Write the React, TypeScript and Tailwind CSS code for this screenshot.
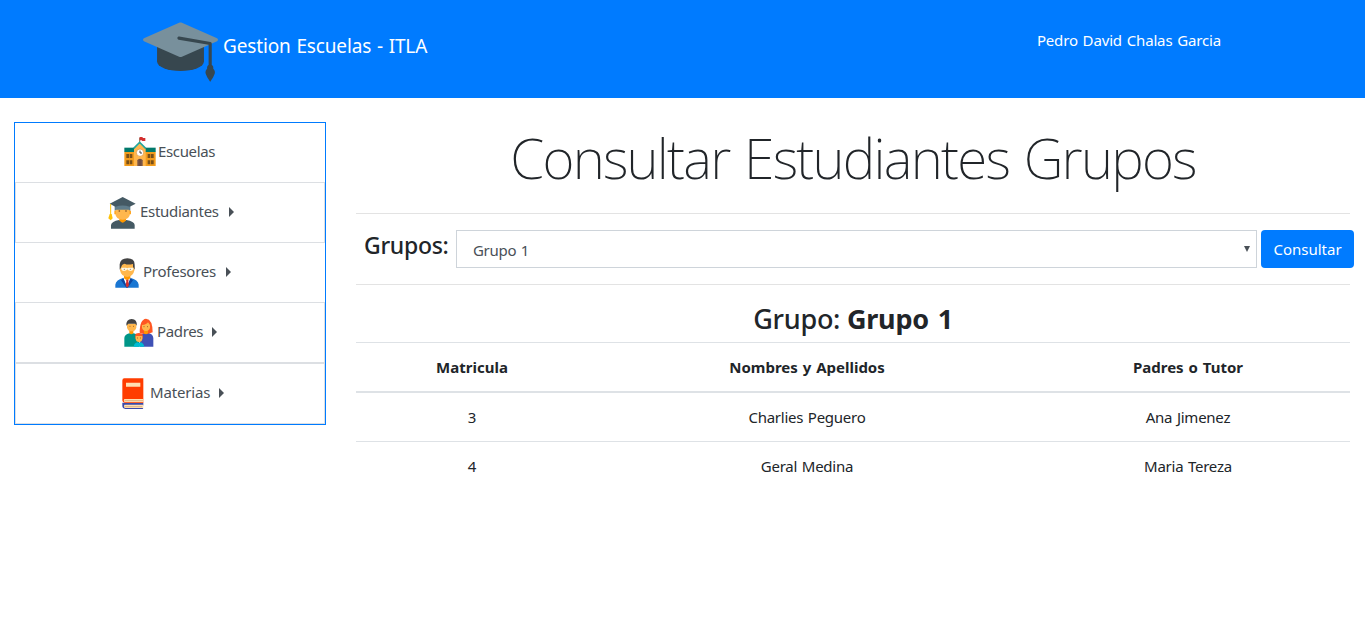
import type { ReactNode } from "react";
import { FcGraduationCap } from "react-icons/fc";

function SchoolIcon() {
  return (
    <svg className="h-[32px] w-[32px]" viewBox="0 0 96 96">
      <path d="M47 5v20" stroke="#8f6b55" strokeWidth="3" />
      <path d="M47 3h8l2 3h7v9h-9l-2-2h-6z" fill="#d32f2f" />
      <path d="M1 47h94v43H1z" fill="#f39c1d" />
      <path d="M1 35h94v13H1z" fill="#00796b" />
      <path d="M30 38 47 22l18 16v52H30z" fill="#ffb74d" />
      <path d="m29 37 18-18 18 18" fill="none" stroke="#26a69a" strokeWidth="5" />
      <circle cx="48" cy="50" r="11" fill="#fff" stroke="#d99030" strokeWidth="2" />
      <path d="M48 44v7h6" fill="none" stroke="#424242" strokeWidth="3" />
      <path d="M40 90V73q1-5 8-5t8 5v17z" fill="#795548" />
      <path d="M48 69v21" stroke="#5d4037" strokeWidth="2" />
      <path d="M7 54h8v12H7zm10 0h8v12h-8zM7 73h8v12H7zm10 0h8v12h-8zM71 54h8v12h-8zm10 0h8v12h-8zM71 73h8v12h-8zm10 0h8v12h-8z" fill="#795019" />
    </svg>
  );
}

function StudentIcon() {
  return (
    <svg className="h-[32px] w-[28px]" viewBox="0 0 84 96">
      <path d="M9 95V84q2-11 24-15h22q24 4 25 15v11z" fill="#455a64" />
      <path d="M34 61h20v9q-10 14-20 0z" fill="#ff9800" />
      <path d="M22 32h44v18q-1 16-22 18-21-2-22-18z" fill="#ffb74d" />
      <path d="M19 41h5v11h-5zM64 41h5v11h-5z" fill="#ffa726" />
      <path d="M20 24h47v17l-5-3H25l-5 3z" fill="#607d8b" />
      <path d="M44 0 83 20 65 29q-21-7-43 0L5 20z" fill="#455a64" />
      <path d="M8 21v34" stroke="#ffc107" strokeWidth="3" />
      <path d="M5 51h6l3 13-6 6-7-6z" fill="#ffc107" />
      <circle cx="34" cy="42" r="2.5" fill="#784719" /><circle cx="54" cy="42" r="2.5" fill="#784719" />
    </svg>
  );
}

function TeacherIcon() {
  return (
    <svg className="h-[30px] w-[24px]" viewBox="0 0 72 90">
      <path d="M1 89V80q1-15 26-21h18q25 6 26 21v9z" fill="#1976d2" />
      <path d="m25 61 11 28 12-28-4-2H29z" fill="#fff" />
      <path d="M25 60 18 67l16 22h4l16-22-8-7-10 27z" fill="#0d47a1" />
      <path d="m33 65 4-2 4 2-1 5 2 12-5 7-5-7 2-12z" fill="#d32f2f" />
      <path d="M27 50h19v11q-10 9-19 0z" fill="#ff9800" />
      <path d="M15 27q2-14 21-14 20 0 22 14v10q-3 18-21 20-19-2-22-20z" fill="#ffb74d" />
      <path d="M14 35V19Q16 1 37 1q22 0 22 19v15l-5-8V18q-16 4-25-1-10 2-10 10z" fill="#424242" />
      <path d="M19 29h14l4 2 4-2h14v5q-2 5-8 5-7 0-10-5-3 5-10 5t-8-5z" fill="#fff8e1" />
      <circle cx="28" cy="34" r="2" fill="#a1887f" /><circle cx="46" cy="34" r="2" fill="#a1887f" />
    </svg>
  );
}

function FamilyIcon() {
  return (
    <svg className="h-[30px] w-[30px]" viewBox="0 0 90 90">
      <path d="M1 86V60q1-11 15-14h13q15 3 16 14v26z" fill="#009688" />
      <path d="M47 86V59q2-11 14-14h12q14 3 15 15v26z" fill="#3f51b5" />
      <path d="M47 44q0-40 19-42 20 2 20 41-20 9-39 1z" fill="#ff5722" />
      <path d="M60 35h12v11q-6 6-12 0zM16 35h12v11q-6 6-12 0z" fill="#ff9800" />
      <path d="M9 17h28v12q-3 11-14 11T9 29zM54 21q14-1 18-8l6 8v9q-3 9-12 9t-12-9z" fill="#ffb74d" />
      <path d="M7 23q-1-20 16-20 17 0 15 20l-4-6H13z" fill="#424242" />
      <path d="M34 52q0-7 11-7t11 7v10H34z" fill="#ff5722" />
      <path d="M35 54h20v9q-1 9-10 9t-10-9z" fill="#ffb74d" />
      <path d="M29 86q2-12 12-13 4 4 8 0 10 2 12 13z" fill="#00bcd4" />
      <path d="M17 25h2m9 0h2m29 1h2m9 0h2M40 60h2m7 0h2" stroke="#784719" strokeWidth="3" />
    </svg>
  );
}

function BookIcon() {
  return (
    <svg className="h-[32px] w-[22px]" viewBox="0 0 66 96">
      <path d="M1 74h63v8l-2 2v6l2 3H10Q1 91 1 84z" fill="#3949ab" />
      <path d="M7 80h57v10H8q-4-5-1-10z" fill="#ffe0b2" />
      <path d="M7 1h57v74H10Q1 73 1 66V8q0-7 6-7z" fill="#ff3d00" />
      <path d="M12 14h43v12H12zM7 63h57v10H9q-6-3-2-10z" fill="#ffe0b2" />
      <path d="M8 68h55M8 86h53" stroke="#c99a70" strokeWidth="2" />
    </svg>
  );
}

type Item = { label: string; icon: ReactNode; row: string; text: string; caret: boolean };

const items: Item[] = [
  { label: "Escuelas", icon: <SchoolIcon />, row: "h-[60px] pl-[109px] pb-px border-b", text: "w-[60px] ml-[2px] tracking-[-0.35px]", caret: false },
  { label: "Estudiantes", icon: <StudentIcon />, row: "h-[60px] pl-[92px] border-b border-x", text: "w-[81px] ml-[4px] tracking-[-0.3px]", caret: true },
  { label: "Profesores", icon: <TeacherIcon />, row: "h-[60px] pl-[100px] border-b", text: "w-[75px] ml-[4px] tracking-[-0.25px]", caret: true },
  { label: "Padres", icon: <FamilyIcon />, row: "h-[61px] pl-[108px] border-b-2 border-x", text: "w-[47px] ml-[3px] tracking-[-0.35px]", caret: true },
  { label: "Materias", icon: <BookIcon />, row: "h-[60px] pl-[106px] border-b border-x", text: "w-[61px] ml-[6px] tracking-[-0.15px]", caret: true },
];

const students = [
  ["3", "Charlies Peguero", "Ana Jimenez"],
  ["4", "Geral Medina", "Maria Tereza"],
];

export default function App() {
  return (
    <div className="min-h-[620px] bg-white font-['Noto_Sans','Open_Sans',sans-serif] text-[15px] text-[#212529]">
      <header className="flex h-[98px] items-start bg-[#007bff] text-white">
        <FcGraduationCap className="mt-[10px] ml-[143px] h-[75px] w-[75px]" />
        <span className="mt-[31px] ml-[5px] text-[19px] leading-[30px] tracking-[-0.15px] [word-spacing:1px]">Gestion Escuelas - ITLA</span>
        <span className="mt-[28px] mr-[144px] ml-auto leading-6 tracking-[-0.15px] [word-spacing:1px]">Pedro David Chalas Garcia</span>
      </header>
      <div className="flex items-start">
        <nav className="mt-[24px] ml-[14px] w-[312px] shrink-0 border border-[#007bff]">
          {items.map((item) => (
            <a key={item.label} className={`flex items-center border-[#dcdfe3] text-[#495057] ${item.row}`}>
              {item.icon}
              <span className={`mb-[3px] whitespace-nowrap leading-6 ${item.text}`}>{item.label}</span>
              {item.caret && <span className="mb-[2px] ml-[8px] border-y-[5px] border-l-[5px] border-y-transparent border-l-[#495057]" />}
            </a>
          ))}
        </nav>
        <main className="mr-[15px] ml-[30px] w-[994px]">
          <h1 className="mt-[26px] h-[89px] text-center text-[55px] leading-[67px] font-extralight tracking-[-1.75px] [word-spacing:2px]">Consultar Estudiantes Grupos</h1>
          <form className="flex h-[72px] items-start border-y border-[#e3e3e3] pt-[16px]">
            <label className="-mt-px ml-[8px] w-[92px] shrink-0 text-[23px] leading-[32px] font-medium tracking-[-0.3px]">Grupos:</label>
            <div className="flex h-[38px] w-[801px] shrink-0 items-center justify-between border border-[#ced4da] pr-[6px] pl-4 text-[#495057]">
              <span className="mt-[2px] tracking-[-0.3px] [word-spacing:1px]">Grupo 1</span>
              <span className="border-x-[3px] border-t-[6px] border-x-transparent border-t-[#495057]" />
            </div>
            <button type="button" className="ml-[4px] h-[38px] w-[93px] shrink-0 rounded bg-[#007bff] text-white">Consultar</button>
          </form>
          <h3 className="mt-[17px] h-[40px] text-center text-[27px] leading-[34px] font-medium tracking-[-0.25px]">
            Grupo: <b className="font-bold [word-spacing:2px]">Grupo 1</b>
          </h3>
          <table className="w-full table-fixed border-separate border-spacing-0 text-center">
            <colgroup>
              <col className="w-[232px]" />
              <col className="w-[438px]" />
              <col className="w-[324px]" />
            </colgroup>
            <thead>
              <tr className="h-[51px]">
                {["Matricula", "Nombres y Apellidos", "Padres o Tutor"].map((h) => (
                  <th key={h} className="border-t border-b-2 border-[#dee2e6] font-bold [word-spacing:1px]">{h}</th>
                ))}
              </tr>
            </thead>
            <tbody>
              {students.map((row, i) => (
                <tr key={row[0]} className={i > 0 ? "h-[49px]" : "h-[48px]"}>
                  {row.map((cell) => (
                    <td key={cell} className={`tracking-[-0.25px] [word-spacing:1px] ${i > 0 ? "border-t border-[#dee2e6]" : "pt-px"}`}>{cell}</td>
                  ))}
                </tr>
              ))}
            </tbody>
          </table>
        </main>
      </div>
    </div>
  );
}
